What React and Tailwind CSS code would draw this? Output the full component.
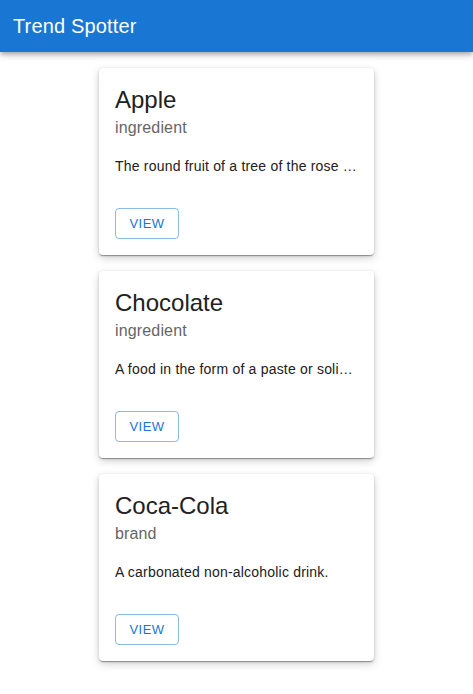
import React from 'react';

const items = [
  { name: 'Apple', type: 'ingredient', desc: 'The round fruit of a tree of the rose family, which typically has thin green or red skin.' },
  { name: 'Chocolate', type: 'ingredient', desc: 'A food in the form of a paste or solid block made from roasted and ground cacao seeds.' },
  { name: 'Coca-Cola', type: 'brand', desc: 'A carbonated non-alcoholic drink.' },
];

const TrendCard = ({ item }) => (
  <div className="w-[275px] rounded bg-white shadow-[0_2px_1px_-1px_rgba(0,0,0,0.2),0_1px_1px_0_rgba(0,0,0,0.14),0_1px_3px_0_rgba(0,0,0,0.12),0_3px_8px_0_rgba(0,0,0,0.18)]">
    <div className="px-4 pt-4">
      <div className="text-[24px] leading-[32px] text-[#212121]">{item.name}</div>
      <div className="text-[16px] leading-[24px] tracking-[0.15px] text-[#666666]">{item.type}</div>
      <p className="mt-4 truncate text-[14px] leading-[20px] tracking-[0.2px] text-[#212121]">{item.desc}</p>
    </div>
    <div className="px-4 pb-4 pt-8">
      <button className="h-[31px] min-w-16 rounded border border-[#1976d2]/50 px-[10px] text-[13px] font-medium uppercase tracking-[0.46px] text-[#1976d2]">
        View
      </button>
    </div>
  </div>
);

export default function App() {
  return (
    <div className="min-h-[694px] bg-white font-['Liberation_Sans',Arial,sans-serif]">
      <header className="flex h-[52px] items-center bg-[#1976d2] px-[13px] shadow-[0_2px_4px_-1px_rgba(0,0,0,0.2),0_4px_5px_0_rgba(0,0,0,0.14),0_1px_10px_0_rgba(0,0,0,0.12)]">
        <h1 className="text-[20px] leading-[32px] tracking-[0.15px] text-white">Trend Spotter</h1>
      </header>
      <main className="flex flex-col items-center gap-4 py-4">
        {items.map((item) => (
          <TrendCard key={item.name} item={item} />
        ))}
      </main>
    </div>
  );
}
